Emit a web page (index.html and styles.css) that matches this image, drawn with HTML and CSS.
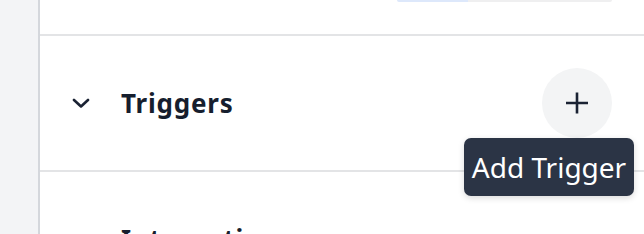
FILE: index.html
```html
<!DOCTYPE html>
<html>
<head>
<meta charset="utf-8">
<link rel="stylesheet" href="styles.css">
</head>
<body>
<div class="layout">
  <aside class="rail"></aside>
  <main class="main">
    <section class="top">
      <div class="pill"><span class="pill-on"></span><span class="pill-off"></span></div>
    </section>
    <section class="group">
      <div class="group-head">
        <svg class="chev" width="18" height="10" viewBox="0 0 18 10"><polyline points="2,2 9,8.5 16,2" fill="none" stroke="#1a2233" stroke-width="2.6" stroke-linecap="round" stroke-linejoin="round"/></svg>
        <h2 class="title">Triggers</h2>
        <div class="add-wrap">
          <button class="add" aria-label="Add Trigger">
            <svg width="24" height="24" viewBox="0 0 24 24"><path d="M12 1.5V22.5M1 12H23" stroke="#1a2233" stroke-width="2.6" fill="none"/></svg>
          </button>
          <div class="tooltip">Add Trigger</div>
        </div>
      </div>
    </section>
    <section class="group">
      <div class="group-head">
        <svg class="chev" width="18" height="10" viewBox="0 0 18 10"><polyline points="2,2 9,8.5 16,2" fill="none" stroke="#1a2233" stroke-width="2.6" stroke-linecap="round" stroke-linejoin="round"/></svg>
        <h2 class="title">Integrations</h2>
        <div class="add-wrap">
          <button class="add ghost" aria-label="Add Integration"></button>
        </div>
      </div>
    </section>
  </main>
</div>
</body>
</html>
```

FILE: styles.css
```css
* { box-sizing: border-box; }
html, body { margin: 0; padding: 0; background: #fff; }
body { font-family: "Noto Sans", "Open Sans", sans-serif; color: #1a2233; overflow: hidden; height: 234px; }
.layout { display: flex; height: 234px; }
.rail { width: 40px; flex: none; background: #f3f4f6; border-right: 2px solid #d4d7dc; }
.main { flex: 1; display: flex; flex-direction: column; }
.top { padding: 0 32px 32px; display: flex; justify-content: flex-end; border-bottom: 2px solid #e3e4e6; }
.pill { display: flex; width: 215px; height: 2px; border-radius: 0 0 3px 3px; overflow: hidden; }
.pill-on { width: 71px; background: #dde8fb; }
.pill-off { flex: 1; background: #efeff0; }
.group { padding: 32px; border-bottom: 2px solid #e3e4e6; }
.group-head { display: flex; align-items: center; height: 70px; }
.chev { flex: none; margin-right: 31px; }
.title { margin: 0; font-size: 26px; font-weight: 700; letter-spacing: 0.8px; line-height: 1; flex: 1; color: #161e2e; }
.add-wrap { position: relative; }
.add { width: 70px; height: 70px; border-radius: 50%; border: none; background: #f3f4f5; display: flex; align-items: center; justify-content: center; padding: 0; }
.add.ghost { background: transparent; }
.tooltip { position: absolute; top: 100%; right: -22px; width: 170px; height: 58px; background: #2b3445; color: #fff; border-radius: 7px; font-size: 28px; line-height: 58px; text-align: center; white-space: nowrap; box-shadow: 0 2px 6px rgba(0,0,0,0.15); z-index: 2; }
```
